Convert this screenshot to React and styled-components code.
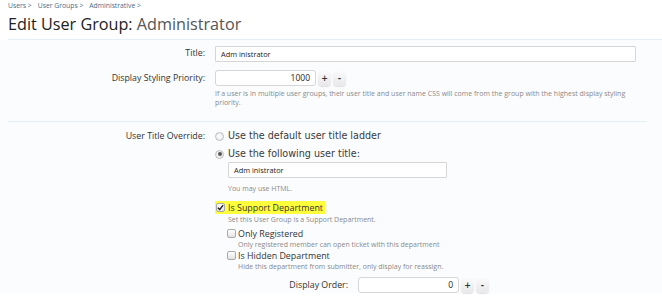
import React from "react";
import styled, { createGlobalStyle } from "styled-components";

const GlobalStyle = createGlobalStyle`
  body {
    margin: 0;
    background: #fff;
    font-family: "Open Sans", "DejaVu Sans", sans-serif;
    color: #222;
  }
`;

const Page = styled.div`
  width: 662px;
  height: 300px;
  overflow: hidden;
`;

const Header = styled.div`
  padding: 1px 0 0 8px;
  background: #fff;
`;

const Crumbs = styled.div`
  display: flex;
  gap: 6px;
  font-size: 6.8px;
  color: #4a6d8c;
  line-height: 10px;
`;

const Title = styled.h1`
  margin: 2px 0 0;
  font-size: 16.2px;
  font-weight: 400;
  line-height: 22px;
  color: #222;
  padding-bottom: 4px;
  border-bottom: 1px solid #e3f0f8;

  span {
    color: #555;
  }
`;

const Form = styled.div`
  background: #fbfcfe;
  padding: 0 8px;
`;

const Section = styled.div`
  padding: ${(p) => p.$pad || "6px 0"};
  border-bottom: ${(p) => (p.$last ? "none" : "1px solid #e3eef5")};
  margin-right: 7px;
`;

const Row = styled.div`
  display: grid;
  grid-template-columns: ${(p) => p.$label || "197px"} 1fr;
  column-gap: 10px;
  align-items: start;
  margin-bottom: ${(p) => p.$mb || "6px"};
`;

const Label = styled.div`
  text-align: right;
  font-size: 8.8px;
  color: #333;
  line-height: 15px;
  padding-top: ${(p) => p.$pt || "0"};
`;

const Input = styled.div`
  box-sizing: border-box;
  width: ${(p) => p.$w};
  height: 16px;
  border: 1px solid #d6d6d6;
  border-radius: ${(p) => (p.$round ? "3px" : "1px")};
  background: #fff;
  font-size: ${(p) => (p.$right ? "8.5px" : "7.4px")};
  line-height: 14px;
  padding: 0 5px;
  color: #222;
  text-align: ${(p) => (p.$right ? "right" : "left")};
`;

const Spin = styled.div`
  display: flex;
  align-items: center;
  gap: 2px;
`;

const SpinButton = styled.div`
  width: 13px;
  height: 15px;
  border-radius: 4px;
  background: linear-gradient(#fafafa, #e8e8ea);
  box-shadow: 0 1px 1px rgba(0, 0, 0, 0.12);
  font-size: 8px;
  line-height: 15px;
  text-align: center;
  color: #333;
  font-family: "DejaVu Sans", sans-serif;
  font-weight: 700;
`;

const Hint = styled.div`
  font-size: 7px;
  line-height: 9px;
  color: #8a8a8a;
  margin-top: ${(p) => p.$mt || "3px"};
  padding-left: ${(p) => p.$indent || "0"};
  max-width: ${(p) => p.$max || "none"};
`;

const Choice = styled.label`
  display: flex;
  align-items: center;
  gap: 4px;
  font-family: "DejaVu Sans", sans-serif;
  font-size: 9.6px;
  color: #3a3a3a;
  line-height: 18px;
`;

const Radio = styled.span`
  box-sizing: border-box;
  width: 9px;
  height: 9px;
  border-radius: 50%;
  border: 1px solid #bdbdbd;
  background: radial-gradient(circle, #fff 0%, #e6e6e6 100%);
  position: relative;

  &::after {
    content: "";
    display: ${(p) => (p.$on ? "block" : "none")};
    position: absolute;
    left: 1.5px;
    top: 1.5px;
    width: 4px;
    height: 4px;
    border-radius: 50%;
    background: #555;
  }
`;

const Check = styled.span`
  box-sizing: border-box;
  width: 9px;
  height: 9px;
  border-radius: 2px;
  border: 1px solid #aaa;
  background: linear-gradient(#fff, #e3e3e3);
  display: flex;
  align-items: center;
  justify-content: center;
  flex-shrink: 0;
`;

const CheckRow = styled.div`
  display: flex;
  align-items: center;
  gap: 2px;
  padding-left: ${(p) => p.$indent || "0"};
  margin-top: ${(p) => p.$mt || "0"};
`;

const CheckText = styled.span`
  font-family: "Open Sans", sans-serif;
  font-size: 8.9px;
  line-height: 13px;
  color: #333;
`;

const Highlight = styled.div`
  display: inline-flex;
  align-items: center;
  gap: 3px;
  background: #ffff3c;
  padding: 0 2px 0 1px;
`;

const Nested = styled.div`
  padding-left: 13px;
  margin-top: -1px;
`;

const Tick = () => (
  <svg width="7" height="7" viewBox="0 0 8 8">
    <path d="M1 4.2 L3.2 6.3 L7 1.3" fill="none" stroke="#222" strokeWidth="1.6" />
  </svg>
);

export default function App() {
  return (
    <Page>
      <GlobalStyle />
      <Header>
        <Crumbs>
          <span>Users &gt;</span>
          <span>User Groups &gt;</span>
          <span>Administrative &gt;</span>
        </Crumbs>
        <Title>
          Edit User Group: <span>Administrator</span>
        </Title>
      </Header>
      <Form>
        <Section $pad="6px 0 14px">
          <Row $mb="8px">
            <Label>Title:</Label>
            <Input $w="421px">Adm inistrator</Input>
          </Row>
          <Row $mb="0">
            <Label $pt="1px">Display Styling Priority:</Label>
            <div>
              <Spin>
                <Input $w="101px" $right $round>
                  1000
                </Input>
                <SpinButton>+</SpinButton>
                <SpinButton>-</SpinButton>
              </Spin>
              <Hint $max="420px">
                If a user is in multiple user groups, their user title and user name CSS will come from the group with
                the highest display styling priority.
              </Hint>
            </div>
          </Row>
        </Section>
        <Section $pad="5px 0 0" $last>
          <Row $mb="0">
            <Label $pt="2px">User Title Override:</Label>
            <div>
              <Choice>
                <Radio />
                Use the default user title ladder
              </Choice>
              <Choice>
                <Radio $on />
                Use the following user title:
              </Choice>
              <Nested>
                <Input $w="219px">Adm inistrator</Input>
                <Hint $mt="6px">You may use HTML.</Hint>
              </Nested>
              <CheckRow $mt="8px">
                <Highlight>
                  <Check>
                    <Tick />
                  </Check>
                  <CheckText>Is Support Department</CheckText>
                </Highlight>
              </CheckRow>
              <Hint $mt="1px" $indent="13px">
                Set this User Group is a Support Department.
              </Hint>
              <CheckRow $indent="12px" $mt="3px">
                <Check />
                <CheckText>Only Registered</CheckText>
              </CheckRow>
              <Hint $mt="0" $indent="23px">
                Only registered member can open ticket with this department
              </Hint>
              <CheckRow $indent="12px">
                <Check />
                <CheckText>Is Hidden Department</CheckText>
              </CheckRow>
              <Hint $mt="0" $indent="23px">
                Hide this department from submitter, only display for reassign.
              </Hint>
              <Row $label="133px" $mb="0" style={{ marginTop: 6 }}>
                <Label $pt="1px">Display Order:</Label>
                <Spin>
                  <Input $w="101px" $right $round>
                    0
                  </Input>
                  <SpinButton>+</SpinButton>
                  <SpinButton>-</SpinButton>
                </Spin>
              </Row>
            </div>
          </Row>
        </Section>
      </Form>
    </Page>
  );
}
